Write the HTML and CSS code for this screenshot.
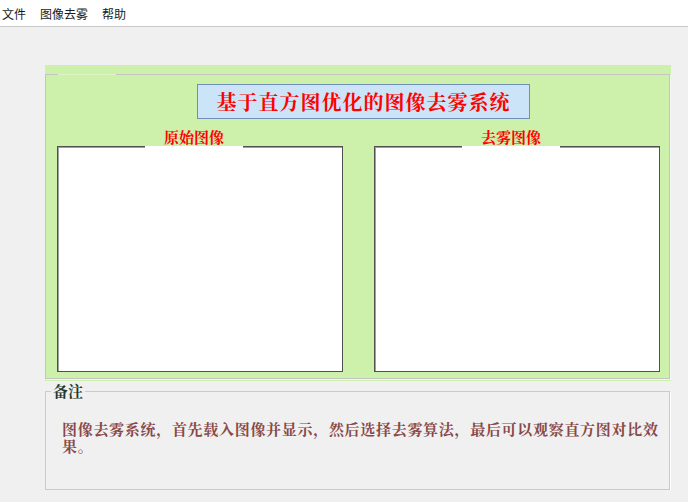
FILE: index.html
```html
<!DOCTYPE html>
<html lang="zh-CN">
<head>
    <meta charset="UTF-8">
    <meta name="viewport" content="width=device-width, initial-scale=1.0">
    <title>图像去雾系统</title>
    <link rel="stylesheet" href="styles.css">
</head>
<body>
    <div class="menubar">
        <span class="menu-item">文件</span>
        <span class="menu-item">图像去雾</span>
        <span class="menu-item">帮助</span>
    </div>
    <div class="main">
        <div class="panel">
            <div class="panel-frame">
                <div class="title-box">基于直方图优化的图像去雾系统</div>
                <div class="views">
                    <div class="view">
                        <div class="view-label">原始图像</div>
                        <div class="view-box"></div>
                    </div>
                    <div class="view">
                        <div class="view-label">去雾图像</div>
                        <div class="view-box"></div>
                    </div>
                </div>
            </div>
        </div>
        <fieldset class="note">
            <legend class="note-title">备注</legend>
            <p class="note-text">图像去雾系统，首先载入图像并显示，然后选择去雾算法，最后可以观察直方图对比效果。</p>
        </fieldset>
    </div>
</body>
</html>
```

FILE: styles.css
```css
body {
    margin: 0;
    padding: 0;
    background: #f0f0f0;
    font-family: "Noto Sans CJK SC", "Liberation Sans", sans-serif;
}
.menubar {
    height: 26px;
    background: #ffffff;
    border-bottom: 1px solid #c9c9c9;
    display: flex;
    align-items: center;
    gap: 14px;
    padding-left: 2px;
    font-size: 12px;
    color: #1a1a1a;
}
.main {
    padding-left: 45px;
}
.panel {
    width: 626px;
    height: 316px;
    margin-top: 38px;
    padding-top: 9px;
    box-sizing: border-box;
    background: #cdf0aa;
}
.panel-frame {
    position: relative;
    width: 625px;
    height: 305px;
    box-sizing: border-box;
    border: 1px solid #c4c4c4;
    box-shadow: 1px 1px 0 #f4f4f4;
    font-family: "Noto Serif CJK SC", "Noto Sans CJK SC", serif;
}
.panel-frame::before {
    content: "";
    position: absolute;
    top: -1px;
    left: 12px;
    width: 58px;
    height: 1px;
    background: #dcf5c4;
}
.title-box {
    margin: 9px 0 0 151px;
    width: 333px;
    height: 35px;
    box-sizing: border-box;
    border: 1px solid #6f8fb8;
    background: #cce4f7;
    color: #ff0000;
    font-size: 20px;
    font-weight: bold;
    letter-spacing: 1px;
    line-height: 33px;
    text-align: center;
}
.views {
    display: flex;
    gap: 31px;
    margin: 8px 0 0 11px;
}
.view-label {
    width: 98px;
    margin-left: 88px;
    height: 19px;
    line-height: 19px;
    text-align: center;
    color: #ff0000;
    font-size: 15px;
    font-weight: bold;
}
.view-box {
    position: relative;
    width: 286px;
    height: 226px;
    box-sizing: border-box;
    background: #ffffff;
    border: 1px solid #505050;
    box-shadow: inset 1px 1px 0 #a0a0a0;
}
.view-box::before {
    content: "";
    position: absolute;
    top: -1px;
    left: 87px;
    width: 98px;
    height: 2px;
    background: #ffffff;
}
.note {
    width: 625px;
    margin: 1px 0 0 0;
    padding: 0;
    box-sizing: border-box;
    border: 1px solid #cbcbcb;
    box-shadow: 1px 1px 0 #ffffff;
    font-family: "Noto Serif CJK SC", "Noto Sans CJK SC", serif;
}
.note-title {
    margin-left: 5px;
    padding: 0 2px;
    font-size: 15px;
    font-weight: bold;
    line-height: 18px;
    color: #1e3a2e;
}
.note-text {
    margin: 0;
    height: 89px;
    box-sizing: border-box;
    padding: 20px 0 0 16px;
    width: 623px;
    font-size: 15px;
    letter-spacing: 0.7px;
    font-weight: bold;
    line-height: 17px;
    color: #884848;
}
```
